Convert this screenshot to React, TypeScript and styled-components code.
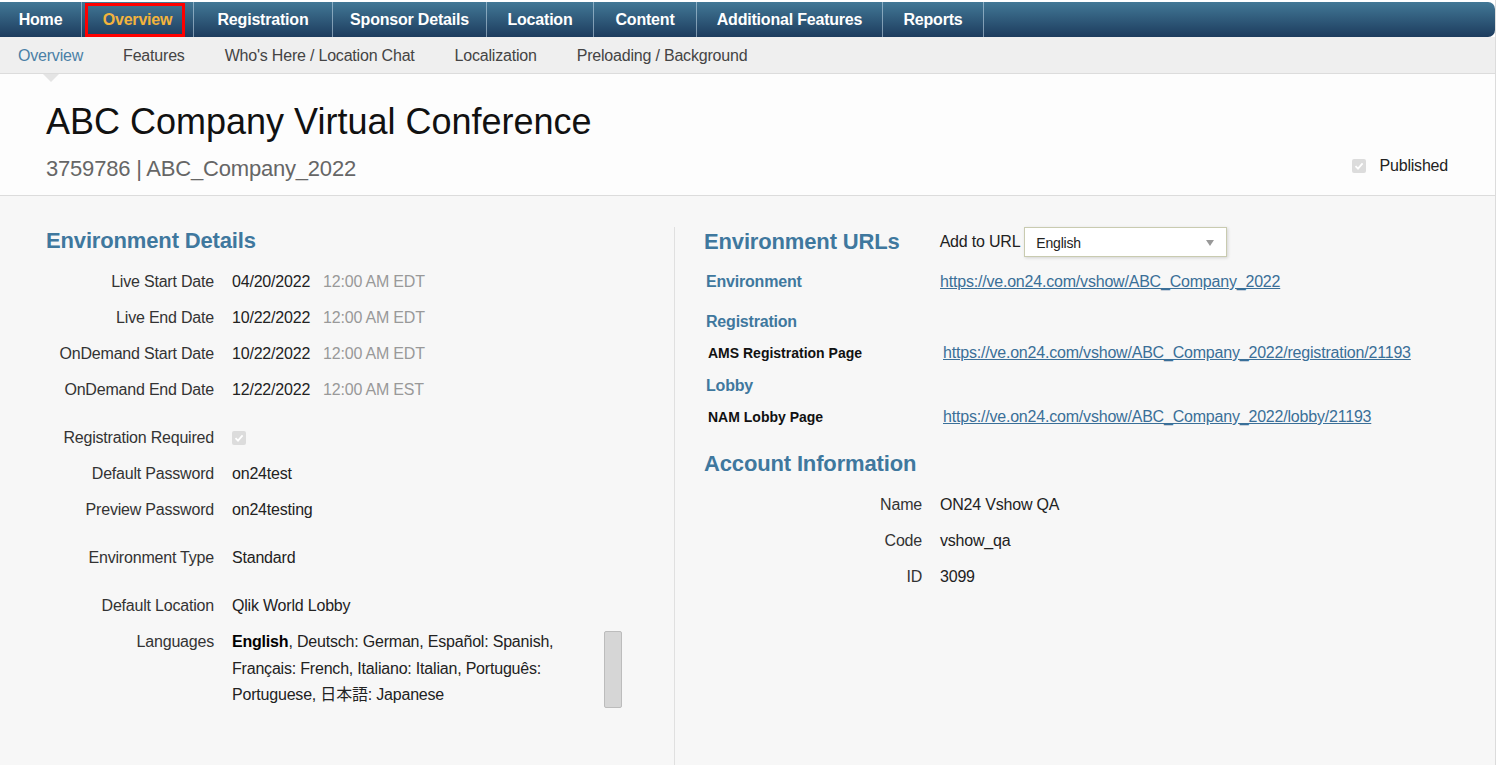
import React from "react";
import styled, { createGlobalStyle } from "styled-components";

const GlobalStyle = createGlobalStyle`
  html, body {
    margin: 0;
    padding: 0;
    background: #ffffff;
  }
  body {
    font-family: "Liberation Sans", Arial, "Noto Sans CJK JP", sans-serif;
    letter-spacing: -0.2px;
    color: #222;
  }
`;

const Page = styled.div`
  width: 1496px;
  min-height: 100vh;
  padding-top: 2px;
  box-sizing: border-box;
  display: flex;
  flex-direction: column;
  border-right: 1px solid #dcdcdc;
`;

const TopNav = styled.nav`
  display: flex;
  height: 35px;
  background: linear-gradient(#427896, #1d3c5e);
  border-radius: 0 7px 7px 0;
`;

const NavItem = styled.a<{ $w: number; $active?: boolean }>`
  position: relative;
  box-sizing: border-box;
  width: ${(p) => p.$w}px;
  display: flex;
  align-items: center;
  justify-content: center;
  border-right: 1px solid rgba(200, 220, 235, 0.55);
  color: ${(p) => (p.$active ? "#f3b43c" : "#ffffff")};
  font-size: 16px;
  font-weight: bold;
  text-decoration: none;
  cursor: pointer;
`;

const Highlight = styled.span`
  position: absolute;
  top: 1px;
  left: 3px;
  right: 8px;
  bottom: 0;
  border: 3px solid #ff0000;
  pointer-events: none;
`;

const SubNav = styled.div`
  position: relative;
  display: flex;
  align-items: center;
  height: 37px;
  padding: 1px 0 0 18px;
  box-sizing: border-box;
  background: #efefef;
  border-bottom: 1px solid #dcdcdc;
`;

const SubItem = styled.a<{ $active?: boolean }>`
  position: relative;
  margin-right: 40px;
  font-size: 16px;
  color: ${(p) => (p.$active ? "#4a7fa6" : "#444")};
  cursor: pointer;

  ${(p) =>
    p.$active &&
    `
    &::after {
      content: "";
      position: absolute;
      left: 50%;
      top: 27px;
      margin-left: -8px;
      border-left: 8px solid transparent;
      border-right: 8px solid transparent;
      border-top: 8px solid #e4e4e4;
    }
  `}
`;

const Header = styled.header`
  display: flex;
  justify-content: space-between;
  align-items: flex-end;
  padding: 28px 47px 13px 46px;
  background: #fdfdfd;
  border-bottom: 1px solid #dcdcdc;
`;

const Title = styled.h1`
  margin: 0;
  font-size: 36px;
  line-height: 40px;
  font-weight: normal;
  letter-spacing: 0;
  color: #111;
`;

const SubTitle = styled.div`
  margin-top: 14px;
  font-size: 22px;
  line-height: 26px;
  color: #666;
`;

const Published = styled.label`
  display: flex;
  align-items: center;
  gap: 14px;
  margin-bottom: 6px;
  font-size: 16px;
  line-height: 20px;
  color: #222;
`;

const Check = styled.span`
  width: 14px;
  height: 14px;
  border-radius: 2px;
  background: #dcdcdc;
  display: inline-flex;
  align-items: center;
  justify-content: center;
`;

const Body = styled.main`
  flex: 1;
  display: flex;
  padding-top: 31px;
  background: #f7f7f7;
`;

const LeftCol = styled.section`
  width: 674px;
  box-sizing: border-box;
  padding-left: 46px;
`;

const RightCol = styled.section`
  flex: 1;
  padding-left: 29px;
  border-left: 1px solid #e0e0e0;
`;

const SectionTitle = styled.h2<{ $mt?: number }>`
  margin: ${(p) => p.$mt ?? 0}px 0 0;
  font-size: 22px;
  line-height: 28px;
  font-weight: bold;
  letter-spacing: -0.15px;
  color: #3f789e;
`;

const DetailList = styled.div`
  margin-top: 9px;
`;

const DetailRow = styled.div<{ $mt?: number; $label: number }>`
  display: grid;
  grid-template-columns: ${(p) => p.$label}px 1fr;
  column-gap: 18px;
  margin-top: ${(p) => p.$mt ?? 0}px;
  font-size: 16px;
  line-height: 36px;
`;

const Label = styled.div`
  text-align: right;
  color: #333;
`;

const Value = styled.div`
  display: flex;
  align-items: center;
  color: #222;
`;

const Time = styled.span`
  margin-left: 13px;
  color: #999;
`;

const LangBox = styled.div`
  display: flex;
  gap: 4px;
  padding-top: 5px;
`;

const LangText = styled.div`
  width: 368px;
  line-height: 26.5px;
  color: #222;
`;

const LangWord = styled.span<{ $bold?: boolean }>`
  font-weight: ${(p) => (p.$bold ? "bold" : "normal")};
  color: ${(p) => (p.$bold ? "#000" : "#222")};
`;

const ScrollThumb = styled.div`
  width: 16px;
  height: 75px;
  margin-top: 2px;
  background: #d6d6d6;
  border: 1px solid #bcbcbc;
  border-radius: 2px;
`;

const UrlHead = styled.div`
  display: flex;
  align-items: center;
  height: 30px;
`;

const AddUrl = styled.span`
  margin-left: 40px;
  margin-right: 4px;
  font-size: 16px;
  color: #222;
`;

const Select = styled.div`
  width: 203px;
  height: 30px;
  box-sizing: border-box;
  display: flex;
  align-items: center;
  justify-content: space-between;
  padding: 2px 12px 0 11px;
  background: #fff;
  border: 1px solid #c9cbb0;
  box-shadow: 1px 1px 3px rgba(0, 0, 0, 0.15);
  font-size: 14px;
  color: #222;
`;

const Caret = styled.span`
  border-left: 4px solid transparent;
  border-right: 4px solid transparent;
  border-top: 6px solid #999;
`;

const UrlRow = styled.div<{ $mt: number; $sub?: boolean }>`
  display: grid;
  grid-template-columns: ${(p) => (p.$sub ? 239 : 236)}px 1fr;
  margin-top: ${(p) => p.$mt}px;
  line-height: 26px;
`;

const UrlLabel = styled.div<{ $sub?: boolean }>`
  padding-left: ${(p) => (p.$sub ? 4 : 2)}px;
  font-weight: bold;
  font-size: ${(p) => (p.$sub ? 14 : 16)}px;
  letter-spacing: ${(p) => (p.$sub ? 0 : -0.2)}px;
  color: ${(p) => (p.$sub ? "#111" : "#3f789e")};
`;

const UrlLink = styled.a`
  font-size: 16px;
  color: #3a6f98;
  text-decoration: underline;
  cursor: pointer;
`;

const SubHead = styled.div<{ $mt: number }>`
  margin-top: ${(p) => p.$mt}px;
  padding-left: 2px;
  line-height: 26px;
  font-size: 16px;
  font-weight: bold;
  color: #3f789e;
`;

const CheckMark = () => (
  <Check>
    <svg width="10" height="10" viewBox="0 0 10 10">
      <path d="M1.5 5.2 L4 7.6 L8.6 2.4" fill="none" stroke="#fff" strokeWidth="1.8" />
    </svg>
  </Check>
);

const navItems = [
  { label: "Home", w: 82 },
  { label: "Overview", w: 112, active: true },
  { label: "Registration", w: 139 },
  { label: "Sponsor Details", w: 154 },
  { label: "Location", w: 107 },
  { label: "Content", w: 103 },
  { label: "Additional Features", w: 186 },
  { label: "Reports", w: 101 },
];

const subItems = ["Overview", "Features", "Who's Here / Location Chat", "Localization", "Preloading / Background"];

const dates = [
  { label: "Live Start Date", date: "04/20/2022", time: "12:00 AM EDT" },
  { label: "Live End Date", date: "10/22/2022", time: "12:00 AM EDT" },
  { label: "OnDemand Start Date", date: "10/22/2022", time: "12:00 AM EDT" },
  { label: "OnDemand End Date", date: "12/22/2022", time: "12:00 AM EST" },
];

const languageWords = [
  ", Deutsch:",
  "German,",
  "Español:",
  "Spanish,",
  "Français:",
  "French,",
  "Italiano:",
  "Italian,",
  "Português:",
  "Portuguese,",
  "日本語:",
  "Japanese",
];

const App: React.FC = () => (
  <>
    <GlobalStyle />
    <Page>
      <TopNav>
        {navItems.map((n) => (
          <NavItem key={n.label} $w={n.w} $active={n.active}>
            {n.label}
            {n.active && <Highlight />}
          </NavItem>
        ))}
      </TopNav>

      <SubNav>
        {subItems.map((s, i) => (
          <SubItem key={s} $active={i === 0}>
            {s}
          </SubItem>
        ))}
      </SubNav>

      <Header>
        <div>
          <Title>ABC Company Virtual Conference</Title>
          <SubTitle>3759786 | ABC_Company_2022</SubTitle>
        </div>
        <Published>
          <CheckMark />
          Published
        </Published>
      </Header>

      <Body>
        <LeftCol>
          <SectionTitle>Environment Details</SectionTitle>
          <DetailList>
            {dates.map((d) => (
              <DetailRow key={d.label} $label={168}>
                <Label>{d.label}</Label>
                <Value>
                  {d.date}
                  <Time>{d.time}</Time>
                </Value>
              </DetailRow>
            ))}
            <DetailRow $label={168} $mt={12}>
              <Label>Registration Required</Label>
              <Value>
                <CheckMark />
              </Value>
            </DetailRow>
            <DetailRow $label={168}>
              <Label>Default Password</Label>
              <Value>on24test</Value>
            </DetailRow>
            <DetailRow $label={168}>
              <Label>Preview Password</Label>
              <Value>on24testing</Value>
            </DetailRow>
            <DetailRow $label={168} $mt={12}>
              <Label>Environment Type</Label>
              <Value>Standard</Value>
            </DetailRow>
            <DetailRow $label={168} $mt={12}>
              <Label>Default Location</Label>
              <Value>Qlik World Lobby</Value>
            </DetailRow>
            <DetailRow $label={168}>
              <Label>Languages</Label>
              <LangBox>
                <LangText>
                  <LangWord $bold>English</LangWord>
                  {languageWords.map((w, i) => (
                    <React.Fragment key={w}>
                      {i > 0 && " "}
                      <LangWord>{w}</LangWord>
                    </React.Fragment>
                  ))}
                </LangText>
                <ScrollThumb />
              </LangBox>
            </DetailRow>
          </DetailList>
        </LeftCol>

        <RightCol>
          <UrlHead>
            <SectionTitle>Environment URLs</SectionTitle>
            <AddUrl>Add to URL</AddUrl>
            <Select>
              English
              <Caret />
            </Select>
          </UrlHead>

          <UrlRow $mt={12}>
            <UrlLabel>Environment</UrlLabel>
            <UrlLink>https://ve.on24.com/vshow/ABC_Company_2022</UrlLink>
          </UrlRow>

          <SubHead $mt={14}>Registration</SubHead>
          <UrlRow $mt={5} $sub>
            <UrlLabel $sub>AMS Registration Page</UrlLabel>
            <UrlLink>https://ve.on24.com/vshow/ABC_Company_2022/registration/21193</UrlLink>
          </UrlRow>

          <SubHead $mt={7}>Lobby</SubHead>
          <UrlRow $mt={5} $sub>
            <UrlLabel $sub>NAM Lobby Page</UrlLabel>
            <UrlLink>https://ve.on24.com/vshow/ABC_Company_2022/lobby/21193</UrlLink>
          </UrlRow>

          <SectionTitle $mt={20}>Account Information</SectionTitle>
          <DetailList>
            <DetailRow $label={218}>
              <Label>Name</Label>
              <Value>ON24 Vshow QA</Value>
            </DetailRow>
            <DetailRow $label={218}>
              <Label>Code</Label>
              <Value>vshow_qa</Value>
            </DetailRow>
            <DetailRow $label={218}>
              <Label>ID</Label>
              <Value>3099</Value>
            </DetailRow>
          </DetailList>
        </RightCol>
      </Body>
    </Page>
  </>
);

export default App;
